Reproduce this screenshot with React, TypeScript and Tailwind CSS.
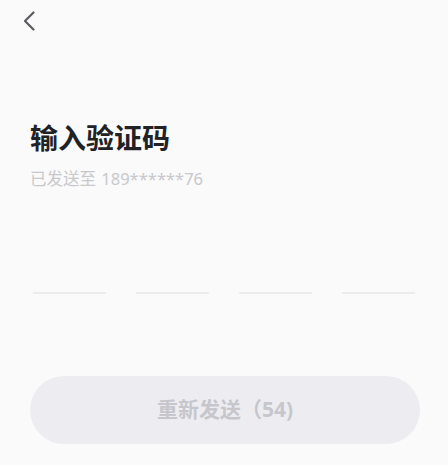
import { useState } from 'react'

const CODE_LENGTH = 4

export default function App() {
  const [seconds] = useState(54)

  return (
    <div
      className="w-[448px] h-[465px] bg-[#fafafa] flex flex-col"
      style={{ fontFamily: '"Noto Sans", "Noto Sans CJK SC", sans-serif' }}
    >
      <div className="h-[44px] pl-[21px] pt-[10px]">
        <button type="button" className="block text-[#5a5a60]">
          <svg width="16" height="22" viewBox="0 0 16 22" fill="none">
            <path d="M12.5 2.5 L4 11 L12.5 19.5" stroke="currentColor" strokeWidth="2.2" strokeLinecap="round" strokeLinejoin="round" />
          </svg>
        </button>
      </div>

      <div className="px-[30px] pt-[76px]">
        <h1 className="text-[28px] leading-[36px] font-bold text-[#222226]">输入验证码</h1>
        <p className="mt-[13px] text-[16.5px] leading-[20px] text-[#c8c8cc]">
          已发送至 <span className="ml-[1px]">189******76</span>
        </p>
      </div>

      {/* code slots */}
      <div className="mt-[103px] px-[33px] flex gap-[30px]">
        {Array.from({ length: CODE_LENGTH }).map((_, i) => (
          <div key={i} className="w-[73px] h-[2px] bg-[#ececee]" />
        ))}
      </div>

      <div className="mt-[82px] px-[30px]">
        <button
          type="button"
          disabled
          className="w-[390px] h-[68px] rounded-full bg-[#ededf1] text-[21px] font-bold text-[#c6c6cc]"
        >
          重新发送（{seconds})
        </button>
      </div>
    </div>
  )
}
